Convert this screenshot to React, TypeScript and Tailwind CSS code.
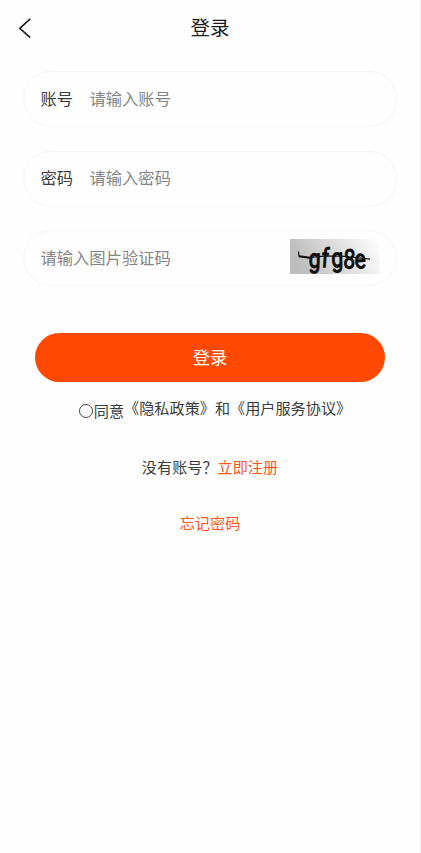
import { useState } from "react";

const captchaChars = [
  { c: "g", x: 18.5, y: 28.5, r: 2 },
  { c: "f", x: 31, y: 28, r: 4 },
  { c: "g", x: 41.5, y: 28, r: -1 },
  { c: "8", x: 53, y: 29, r: 3 },
  { c: "e", x: 65, y: 29.5, r: -3 },
];

function Captcha() {
  return (
    <svg width="90" height="35" viewBox="0 0 90 35" className="shrink-0">
      <defs>
        <linearGradient id="captcha-bg" x1="0" y1="0.2" x2="1" y2="0">
          <stop offset="0" stopColor="#bdbdbd" />
          <stop offset="0.97" stopColor="#fefefe" />
        </linearGradient>
      </defs>
      <rect width="90" height="35" fill="url(#captcha-bg)" />
      <g fill="#0d0d0d" stroke="#0d0d0d" strokeWidth="1" strokeLinejoin="round" fontFamily="Roboto, sans-serif" fontSize="24" fontWeight="400">
        {captchaChars.map((l, i) => (
          <text key={i} transform={`translate(${l.x} ${l.y}) rotate(${l.r}) scale(0.88 1.12)`}>
            {l.c}
          </text>
        ))}
      </g>
      <path d="M8.5 12.5 L9 17.3 L18 18.6 L34 17.2 L52 17.2 L80 20.2" fill="none" stroke="#111" strokeWidth="1.2" />
      <path d="M9 17.2 L20 18.8" stroke="#111" strokeWidth="2" />
    </svg>
  );
}

const fieldClass = "flex h-14 items-center rounded-full border border-[#f5f5f5] pl-[16.5px] pr-4";
const inputClass = "min-w-0 flex-1 bg-transparent pb-0.5 text-[16.3px] text-[#333] outline-none placeholder:text-[#858585]";

const App = () => {
  const [agreed, setAgreed] = useState(false);

  return (
    <div className="h-[853px] w-full border-r border-[#ececec] bg-[#fefefe] font-['Noto_Sans_CJK_SC',sans-serif] text-[#3a3d3d]">
      <header className="grid h-[55px] grid-cols-[48px_1fr_48px] items-center">
        <button className="pl-[18px]" aria-label="返回">
          <svg width="14" height="20" viewBox="0 0 14 20" fill="none" stroke="#1a1a1a" strokeWidth="1.6">
            <path d="M12.2 0.8 L1.8 10.3 L12.2 19.6" />
          </svg>
        </button>
        <h1 className="pb-0.5 text-center text-[19.5px] leading-7 text-[#1a1a1a]">登录</h1>
      </header>

      <form className="px-[23px] pt-4" onSubmit={(e) => e.preventDefault()}>
        <div className="flex flex-col gap-[23.5px]">
          <div className={fieldClass}>
            <label className="w-[49px] pb-0.5 text-[16.3px]">账号</label>
            <input className={inputClass} placeholder="请输入账号" />
          </div>
          <div className={fieldClass}>
            <label className="w-[49px] pb-0.5 text-[16.3px]">密码</label>
            <input className={inputClass} type="password" placeholder="请输入密码" />
          </div>
          <div className={fieldClass}>
            <input className={inputClass} placeholder="请输入图片验证码" />
            <div className="-mt-1">
              <Captcha />
            </div>
          </div>
        </div>

        <button className="mx-3 mt-[46.5px] flex h-[49px] w-[350px] items-center justify-center rounded-full bg-[#ff4802] text-[17.3px] text-white">
          登录
        </button>
      </form>

      <div className="mt-[11.5px] flex justify-center pl-[10px] text-[15.15px] leading-7">
        <label className="flex items-center pt-[3px]">
          <input type="checkbox" className="sr-only" checked={agreed} onChange={() => setAgreed(!agreed)} />
          <span className={`mr-px mt-0.5 size-3.5 rounded-full border border-[#444] ${agreed ? "bg-[#ff4802]" : ""}`} />
          同意
        </label>
        <span>《隐私政策》和《用户服务协议》</span>
      </div>

      <p className="mt-7 text-center text-[15.15px] leading-7">
        没有账号？<a className="text-[#ff5419]">立即注册</a>
      </p>
      <p className="mt-[27.5px] text-center text-[15.15px] leading-7">
        <a className="text-[#ff5419]">忘记密码</a>
      </p>
    </div>
  );
};
export default App;
